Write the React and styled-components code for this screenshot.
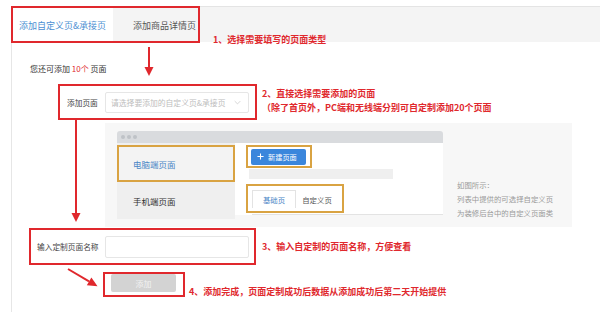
import React from 'react';
import styled, { createGlobalStyle } from 'styled-components';

const RED = '#e0282d';
const ORANGE = '#d9a342';

const GlobalStyle = createGlobalStyle`
  html, body {
    margin: 0;
    padding: 0;
    background: #fff;
  }
  body {
    font-family: "Noto Sans CJK SC", "Noto Sans", sans-serif;
    color: #333;
  }
`;

export default function App() {
  return (
    <Page>
      <GlobalStyle />
      <Frame>
        <TabBar>
          <TabGroup>
            <TopTab $active>添加自定义页&amp;承接页</TopTab>
            <TopTab>添加商品详情页</TopTab>
          </TabGroup>
        </TabBar>

        <Body>
          <Quota>
            您还可添加 <Em>10个</Em> 页面
          </Quota>

          <StepRow $top={8}>
            <Marked $left={28} $width={199} $height={36}>
              <FieldLabel $width={38}>添加页面</FieldLabel>
              <Select>
                <span>请选择要添加的自定义页&amp;承接页</span>
                <Chevron viewBox="0 0 10 6">
                  <path d="M1 1l4 4 4-4" fill="none" stroke="#c4c4c4" strokeWidth="1" />
                </Chevron>
              </Select>
            </Marked>
            <Callout $top={3}>
              2、直接选择需要添加的页面
              <br />
              （除了首页外，PC端和无线端分别可自定制添加20个页面
            </Callout>
          </StepRow>

          <Demo>
            <Window>
              <TitleBar>
                <Dot />
                <Dot />
                <Dot />
              </TitleBar>
              <WindowBody>
                <Sidebar>
                  <SideItem $active>电脑端页面</SideItem>
                  <SideItem>手机端页面</SideItem>
                </Sidebar>
                <Main>
                  <HighlightBox>
                    <NewButton>
                      <PlusIcon viewBox="0 0 8 8">
                        <path d="M4 0.5v7M0.5 4h7" stroke="#fff" strokeWidth="1.2" />
                      </PlusIcon>
                      新建页面
                    </NewButton>
                  </HighlightBox>
                  <Placeholder />
                  <TabStrip>
                    <MiniTabs>
                      <MiniTab $active>基础页</MiniTab>
                      <MiniTab>自定义页</MiniTab>
                    </MiniTabs>
                  </TabStrip>
                </Main>
              </WindowBody>
            </Window>
            <Hint>
              如图所示：
              <br />
              列表中提供的可选择自定义页
              <br />
              为装修后台中的自定义页面类
            </Hint>
          </Demo>

          <StepRow $top={1} $align="center">
            <Marked $left={-1} $width={227} $height={37} $pl={6}>
              <FieldLabel $width={68}>输入定制页面名称</FieldLabel>
              <Input />
            </Marked>
            <Callout $left={6}>3、输入自定制的页面名称，方便查看</Callout>
          </StepRow>

          <StepRow $top={7} $align="flex-end">
            <Marked $left={73} $width={82} $height={25} $pl={6} $align="flex-start">
              <AddButton>添加</AddButton>
            </Marked>
            <Callout $left={4} $bottom={-2}>
              4、添加完成，页面定制成功后数据从添加成功后第二天开始提供
            </Callout>
          </StepRow>
        </Body>
      </Frame>

      <FloatingCallout>1、选择需要填写的页面类型</FloatingCallout>

      <Arrows viewBox="0 0 600 312" width="600" height="312">
        <g stroke={RED} strokeWidth="2" fill={RED}>
          <line x1="149" y1="47" x2="149" y2="68" />
          <polygon points="144.5,67 153.5,67 149,76" stroke="none" />
          <line x1="76" y1="120" x2="76" y2="214" />
          <polygon points="71.5,213 80.5,213 76,222" stroke="none" />
          <line x1="68" y1="269" x2="89" y2="281.4" />
          <polygon points="86.8,285.3 91.4,277.5 97.5,286.3" stroke="none" />
        </g>
      </Arrows>
    </Page>
  );
}

const Page = styled.div`
  position: relative;
  width: 600px;
  height: 312px;
  overflow: hidden;
  background: #fff;
`;

const Frame = styled.div`
  margin: 6px 0 0 11px;
  height: 306px;
  border-left: 1px solid #e6e6e6;
`;

const TabBar = styled.div`
  display: flex;
  height: 36px;
  background: #f4f4f4;
  border-top: 1px solid #e4e4e4;
  box-sizing: border-box;
`;

const TabGroup = styled.div`
  display: flex;
  width: 187px;
  outline: 2px solid ${RED};
  outline-offset: -1px;
  position: relative;
  z-index: 1;
`;

const TopTab = styled.div`
  display: flex;
  align-items: center;
  justify-content: ${({ $active }) => ($active ? 'center' : 'flex-start')};
  width: ${({ $active }) => ($active ? '101px' : 'auto')};
  padding-left: ${({ $active }) => ($active ? '0' : '20px')};
  padding-top: 2px;
  box-sizing: border-box;
  font-size: 9px;
  white-space: nowrap;
  color: ${({ $active }) => ($active ? '#4b8fd2' : '#555')};
  background: ${({ $active }) => ($active ? '#fff' : 'transparent')};
`;

const Body = styled.div`
  padding-left: 18px;
`;

const Quota = styled.div`
  margin-top: 20px;
  font-size: 8px;
  line-height: 14px;
  color: #333;
`;

const Em = styled.span`
  color: ${RED};
`;

const StepRow = styled.div`
  display: flex;
  align-items: ${({ $align }) => $align || 'flex-start'};
  margin-top: ${({ $top }) => $top || 0}px;
`;

const Marked = styled.div`
  display: flex;
  align-items: ${({ $align }) => $align || 'center'};
  flex-shrink: 0;
  margin-left: ${({ $left }) => $left}px;
  width: ${({ $width }) => $width}px;
  height: ${({ $height }) => $height}px;
  padding-left: ${({ $pl }) => $pl ?? 7}px;
  box-sizing: border-box;
  border: 2px solid ${RED};
`;

const FieldLabel = styled.div`
  width: ${({ $width }) => $width}px;
  flex-shrink: 0;
  font-size: 7.7px;
  color: #444;
  white-space: nowrap;
`;

const Select = styled.div`
  display: flex;
  align-items: center;
  justify-content: space-between;
  width: 144px;
  height: 21px;
  padding: 0 7px 0 5px;
  box-sizing: border-box;
  border: 1px solid #e6e6e6;
  border-radius: 2px;
  background: #fff;
  font-size: 7.8px;
  color: #bdbdbd;
  white-space: nowrap;
`;

const Chevron = styled.svg`
  width: 7px;
  height: 5px;
`;

const Input = styled.div`
  width: 144px;
  height: 22px;
  box-sizing: border-box;
  border: 1px solid #e6e6e6;
  border-radius: 2px;
  background: #fff;
`;

const Callout = styled.div`
  margin-left: ${({ $left }) => $left ?? 5}px;
  margin-top: ${({ $top }) => $top || 0}px;
  margin-bottom: ${({ $bottom }) => $bottom || 0}px;
  font-size: 9px;
  line-height: 14px;
  font-weight: 700;
  color: ${RED};
  white-space: nowrap;
`;

const FloatingCallout = styled(Callout)`
  position: absolute;
  left: 213px;
  top: 33px;
  margin: 0;
`;

const Demo = styled.div`
  display: flex;
  align-items: flex-start;
  margin: 3px 0 0 75px;
  width: 467px;
  height: 104px;
  padding: 8px 12px;
  box-sizing: border-box;
  background: #f7f7f7;
`;

const Window = styled.div`
  width: 326px;
  flex-shrink: 0;
`;

const TitleBar = styled.div`
  display: flex;
  align-items: center;
  gap: 2px;
  height: 12px;
  padding-left: 4px;
  border-radius: 3px 3px 0 0;
  background: #d9dbde;
`;

const Dot = styled.span`
  width: 4px;
  height: 4px;
  border-radius: 50%;
  background: #bfc2c7;
`;

const WindowBody = styled.div`
  display: flex;
  align-items: flex-start;
`;

const Sidebar = styled.div`
  width: 118px;
  height: 76px;
  padding-top: 2px;
  box-sizing: border-box;
  background: #efefef;
`;

const SideItem = styled.div`
  display: flex;
  align-items: center;
  height: 37px;
  padding-left: ${({ $active }) => ($active ? '14px' : '16px')};
  box-sizing: border-box;
  font-size: 8.5px;
  color: ${({ $active }) => ($active ? '#4a86c6' : '#333')};
  border: ${({ $active }) => ($active ? `2px solid ${ORANGE}` : 'none')};
  background: ${({ $active }) => ($active ? '#f3f3f3' : 'transparent')};
`;

const Main = styled.div`
  flex: 1;
  height: 72px;
  padding: 2px 0 0 11px;
  box-sizing: border-box;
  background: #fff;
`;

const HighlightBox = styled.div`
  display: flex;
  align-items: center;
  width: 66px;
  height: 23px;
  padding-left: 3px;
  box-sizing: border-box;
  border: 2px solid ${ORANGE};
`;

const NewButton = styled.div`
  display: flex;
  align-items: center;
  gap: 4px;
  width: 55px;
  height: 16px;
  padding-left: 6px;
  box-sizing: border-box;
  border-radius: 2px;
  background: #3a86dc;
  color: #fff;
  font-size: 7.2px;
  white-space: nowrap;
`;

const PlusIcon = styled.svg`
  width: 7px;
  height: 7px;
`;

const Placeholder = styled.div`
  width: 144px;
  height: 10px;
  margin: 1px 0 0 3px;
  background: #efefef;
`;

const TabStrip = styled.div`
  margin: 11px 0 0 6px;
  border-bottom: 1px solid #e3e3e3;
`;

const MiniTabs = styled.div`
  display: inline-flex;
  vertical-align: top;
  outline: 2px solid ${ORANGE};
  outline-offset: 4px;
`;

const MiniTab = styled.div`
  display: flex;
  align-items: center;
  justify-content: center;
  height: 18px;
  width: ${({ $active }) => ($active ? '44px' : '42px')};
  box-sizing: border-box;
  font-size: 7.4px;
  color: ${({ $active }) => ($active ? '#4a86c6' : '#555')};
  background: ${({ $active }) => ($active ? '#fff' : 'transparent')};
  border: ${({ $active }) => ($active ? '1px solid #e3e3e3' : '1px solid transparent')};
  border-bottom: none;
  margin-bottom: -1px;
`;

const Hint = styled.div`
  margin: 47px 0 0 14px;
  font-size: 7.4px;
  line-height: 14px;
  color: #9a9a9a;
  white-space: nowrap;
`;

const AddButton = styled.div`
  display: flex;
  align-items: center;
  justify-content: center;
  width: 65px;
  height: 18px;
  border-radius: 2px;
  background: #d3d3d3;
  color: #f2f2f2;
  font-size: 8px;
`;

const Arrows = styled.svg`
  position: absolute;
  left: 0;
  top: 0;
  pointer-events: none;
`;
